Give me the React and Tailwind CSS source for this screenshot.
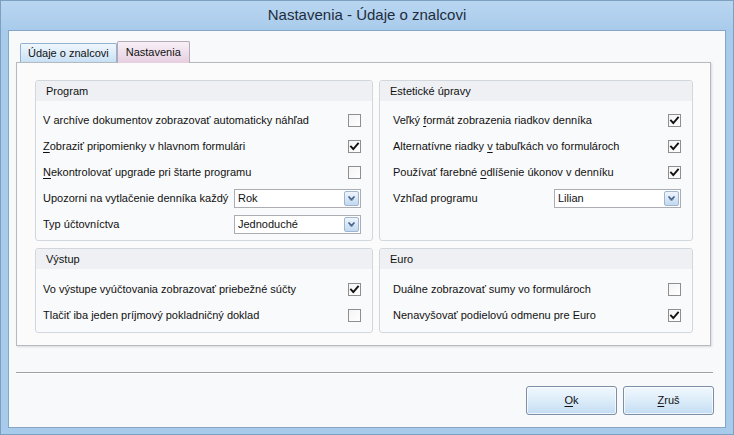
import React from "react";

const Check = ({ checked }) => (
  <div className="w-[13px] h-[13px] shrink-0 border border-[#8f8f8f] bg-gradient-to-br from-[#f4f4f4] to-white flex items-center justify-center">
    {checked && (
      <svg width="11" height="11" viewBox="0 0 11 11">
        <path d="M2 5.6 L4.3 8 L9 2.6" fill="none" stroke="#111" strokeWidth="1.9" strokeLinecap="square" />
      </svg>
    )}
  </div>
);

const Combo = ({ value }) => (
  <div className="w-[127px] h-[19px] shrink-0 border border-[#abadb3] bg-white flex items-center justify-between pl-[3px] pr-[1px]">
    <span>{value}</span>
    <div className="w-[15px] h-[15px] rounded-[2px] border border-[#9db6d2] bg-gradient-to-b from-[#eef5fc] to-[#c3d9ef] flex items-center justify-center">
      <svg width="9" height="9" viewBox="0 0 9 9">
        <path d="M1.5 2.5 L4.5 5.5 L7.5 2.5" fill="none" stroke="#3f5d85" strokeWidth="1.6" />
        <path d="M2.5 5 L4.5 7 L6.5 5" fill="none" stroke="#7d97b8" strokeWidth="1" />
      </svg>
    </div>
  </div>
);

const U = ({ children }) => <span className="underline underline-offset-2">{children}</span>;

const Row = ({ children, right }) => (
  <div className="h-[26px] flex items-center justify-between">
    <span className="whitespace-nowrap">{children}</span>
    {right}
  </div>
);

const Group = ({ title, className, rowPad, children }) => (
  <div className={`border border-[#d2d7dd] rounded-[3px] bg-[#f9fafb] flex flex-col ${className}`}>
    <div className="h-[20px] shrink-0 bg-[#eef0f3] flex items-center pl-[10px] rounded-t-[3px]">{title}</div>
    <div className={`flex flex-col ${rowPad}`}>{children}</div>
  </div>
);

export default function App() {
  return (
    <div className="w-[734px] h-[435px] bg-[#a9cbeb] border border-[#7d9fc0] flex flex-col font-['Liberation_Sans',Arial,sans-serif] text-[11px] text-[#111]">
      <div className="h-[29px] shrink-0 flex items-center justify-center text-[15px] text-[#1e2d3d] bg-gradient-to-b from-[#b9d6f1] to-[#a9cbeb]">
        Nastavenia - Údaje o znalcovi
      </div>
      <div className="flex-1 mx-[7px] mb-[6px] border border-[#86a6c6] bg-[#f8f9fb] flex flex-col pl-[7px] pr-[11px] pt-[10px]">
        <div className="flex items-end h-[21px] ml-[4px]">
          <div className="h-[19px] px-[7px] flex items-center border border-b-0 border-[#93b2cf] rounded-t-[2px] bg-gradient-to-b from-[#f0f7fd] to-[#c9e1f5]">
            Údaje o znalcovi
          </div>
          <div className="h-[22px] -mb-px relative z-10 px-[8px] flex items-center border border-b-0 border-[#b7a8b8] rounded-t-[2px] bg-gradient-to-b from-[#f8f0f6] to-[#e6cfe0]">
            Nastavenia
          </div>
        </div>
        <div className="w-[695px] h-[284px] border border-[#b5bac1] bg-[#fbfbfc] shadow-[1px_1px_2px_rgba(0,0,0,0.12)] pl-[18px] pt-[17px]">
          <div className="flex gap-[6px]">
            <Group title="Program" className="w-[338px] h-[161px]" rowPad="pt-[6px] pl-[7px] pr-[11px]">
              <Row right={<Check />}>V archíve dokumentov zobrazovať automaticky náhľad</Row>
              <Row right={<Check checked />}><U>Z</U>obraziť pripomienky v hlavnom formulári</Row>
              <Row right={<Check />}><U>N</U>ekontrolovať upgrade pri štarte programu</Row>
              <Row right={<Combo value="Rok" />}>Upozorni na vytlačenie denníka každý</Row>
              <Row right={<Combo value="Jednoduché" />}>Typ účtovníctva</Row>
            </Group>
            <Group title="Estetické úpravy" className="w-[314px] h-[161px]" rowPad="pt-[6px] pl-[13px] pr-[11px]">
              <Row right={<Check checked />}>Veľký <U>f</U>ormát zobrazenia riadkov denníka</Row>
              <Row right={<Check checked />}>Alternatívne riadky <U>v</U> tabuľkách vo formulároch</Row>
              <Row right={<Check checked />}>Používať farebné <U>o</U>dlíšenie úkonov v denníku</Row>
              <Row right={<Combo value="Lilian" />}>Vzhľad programu</Row>
            </Group>
          </div>
          <div className="flex gap-[6px] mt-[7px]">
            <Group title="Výstup" className="w-[338px] h-[85px]" rowPad="pt-[7px] pl-[7px] pr-[11px]">
              <Row right={<Check checked />}>Vo výstupe vyúčtovania zobrazovať priebežné súčty</Row>
              <Row right={<Check />}>Tlačiť iba jeden príjmový pokladničný doklad</Row>
            </Group>
            <Group title="Euro" className="w-[314px] h-[85px]" rowPad="pt-[7px] pl-[13px] pr-[11px]">
              <Row right={<Check />}>Duálne zobrazovať sumy vo formulároch</Row>
              <Row right={<Check checked />}>Nenavyšovať podielovú odmenu pre Euro</Row>
            </Group>
          </div>
        </div>
        <div className="w-[697px] mt-[26px] border-t border-[#a0a0a0] shadow-[0_1px_0_#ffffff]" />
        <div className="flex justify-end gap-[6px] mt-[13px]">
          <button className="w-[91px] h-[29px] rounded-[3px] border border-[#7c8fa6] bg-gradient-to-b from-[#f1f8fe] via-[#dcecf9] to-[#c4ddf3] shadow-[inset_0_0_0_1px_rgba(255,255,255,0.7)] text-[11px]">
            <U>O</U>k
          </button>
          <button className="w-[91px] h-[29px] rounded-[3px] border border-[#7c8fa6] bg-gradient-to-b from-[#f1f8fe] via-[#dcecf9] to-[#c4ddf3] shadow-[inset_0_0_0_1px_rgba(255,255,255,0.7)] text-[11px]">
            <U>Z</U>ruš
          </button>
        </div>
      </div>
    </div>
  );
}
